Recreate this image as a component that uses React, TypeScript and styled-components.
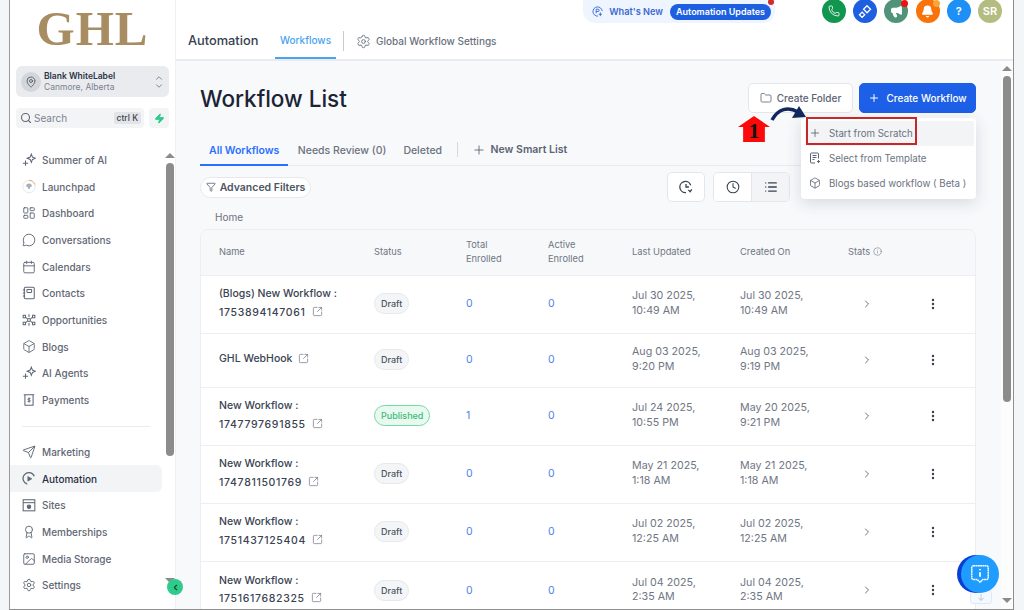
import styled, { createGlobalStyle } from "styled-components";
import {
  Bell,
  Box,
  Calendar,
  ChevronDown,
  ChevronLeft,
  ChevronRight,
  ChevronUp,
  Clock,
  EllipsisVertical,
  Folder,
  Funnel,
  Image,
  Info,
  LayoutDashboard,
  List,
  MapPin,
  Megaphone,
  MessageCircle,
  Phone,
  Plus,
  Search,
  Send,
  Settings,
  SquareArrowOutUpRight,
  Award,
  Zap,
} from "lucide-react";

const GlobalStyle = createGlobalStyle`
  html, body {
    margin: 0;
    height: 100%;
    background: #f4f5f6;
    font-family: Inter, "Liberation Sans", sans-serif;
    overflow: hidden;
  }
  * { box-sizing: border-box; }
`;

const SparkIcon = () => (
  <svg width="14" height="14" viewBox="0 0 24 24" fill="none" stroke="currentColor" strokeWidth="1.8">
    <path d="M6 13v9M1.5 17.5h9" />
    <path d="M16 2l2 5 5 2-5 2-2 5-2-5-5-2 5-2z" />
  </svg>
);

const LaunchIcon = () => (
  <svg width="15" height="15" viewBox="0 0 24 24" fill="none" strokeWidth="1.6">
    <circle cx="12" cy="12" r="10.5" stroke="#e3e5e8" />
    <path d="M12 1.5a10.5 10.5 0 0 1 10 7" stroke="#f0a55f" />
    <path d="M7 12a5 5 0 0 1 10 0l-3 1v3h-4v-3z" fill="#a9afb8" />
  </svg>
);

const ContactsIcon = () => (
  <svg width="14" height="14" viewBox="0 0 24 24" fill="none" stroke="currentColor" strokeWidth="1.8">
    <rect x="4" y="2" width="17" height="20" rx="2" />
    <rect x="8.5" y="6" width="8" height="5" rx="1" />
    <path d="M1.5 7h4M1.5 12h4M1.5 17h4" />
  </svg>
);

const OpportunitiesIcon = () => (
  <svg width="14" height="14" viewBox="0 0 24 24" fill="none" stroke="currentColor" strokeWidth="1.8">
    <circle cx="12" cy="12" r="2.5" />
    <path d="M2 4h4v4H2zM18 4h4v4h-4zM2 16h4v4H2zM18 16h4v4h-4z" />
    <path d="M12 2v5M12 17v5M7 8l2.5 2M17 8l-2.5 2M7 16l2.5-2M17 16l-2.5-2" />
  </svg>
);

const PaymentsIcon = () => (
  <svg width="14" height="14" viewBox="0 0 24 24" fill="none" stroke="currentColor" strokeWidth="1.8">
    <path d="M3 3h18M5 3v18h14V3" />
    <path d="M12 7.5v9M14.5 9.5h-3.2a1.3 1.3 0 0 0 0 2.6h1.6a1.3 1.3 0 0 1 0 2.6H9.5" strokeWidth="1.5" />
  </svg>
);

const AutomationIcon = () => (
  <svg width="15" height="15" viewBox="0 0 24 24" fill="none" stroke="currentColor" strokeWidth="2.2">
    <path d="M21 8A10 10 0 1 0 9 21.5" />
    <path d="M10 8.5l7 4-7 4z" fill="currentColor" strokeWidth="1" />
  </svg>
);

const SitesIcon = () => (
  <svg width="14" height="14" viewBox="0 0 24 24" fill="none" stroke="currentColor" strokeWidth="1.8">
    <rect x="2" y="3" width="20" height="19" />
    <path d="M2 8h20" />
    <circle cx="12" cy="15" r="3" fill="currentColor" />
  </svg>
);

const HistoryIcon = () => (
  <svg width="14" height="14" viewBox="0 0 24 24" fill="none" stroke="currentColor" strokeWidth="2.2">
    <path d="M20 9A9.5 9.5 0 1 0 12 21.5" />
    <path d="M12 7v5h5" />
    <path d="M16 17l3 3 3-4" />
  </svg>
);

const TemplateIcon = () => (
  <svg width="12" height="12" viewBox="0 0 24 24" fill="none" stroke="currentColor" strokeWidth="2">
    <path d="M12 22H5a2 2 0 0 1-2-2V4a2 2 0 0 1 2-2h12a2 2 0 0 1 2 2v9" />
    <path d="M7 7h8M7 11h8M7 15h4" />
    <path d="M19 16v6M16 19h6" />
  </svg>
);

const DiamondsIcon = () => (
  <svg width="14" height="14" viewBox="0 0 24 24" fill="none" stroke="white" strokeWidth="2.2">
    <path d="M15.5 3l6 6-6 6-6-6z" />
    <path d="M7 14l4.5 4.5L7 23l-4.5-4.5z" />
  </svg>
);

const NewsIcon = () => (
  <svg width="13" height="13" viewBox="0 0 24 24" fill="none" stroke="currentColor" strokeWidth="2">
    <path d="M13 22A10 10 0 1 1 22 11" />
    <path d="M9 16V7h4a2.5 2.5 0 0 1 0 5H9" />
    <path d="M18 14v8M14.5 18h7" />
  </svg>
);

const ChatInfoIcon = () => (
  <svg width="22" height="22" viewBox="0 0 24 24" fill="none" stroke="white" strokeWidth="1.6">
    <path d="M5 3h14a2 2 0 0 1 2 2v11a2 2 0 0 1-2 2h-4l-3 3-3-3H5a2 2 0 0 1-2-2V5a2 2 0 0 1 2-2z" strokeDasharray="2 0.4" />
    <path d="M12 10v5M12 6.5v1.5" strokeWidth="2" />
  </svg>
);

const navTop = [
  { label: "Summer of AI", icon: <SparkIcon /> },
  { label: "Launchpad", icon: <LaunchIcon /> },
  { label: "Dashboard", icon: <LayoutDashboard size={14} strokeWidth={1.6} /> },
  { label: "Conversations", icon: <MessageCircle size={14} strokeWidth={1.6} /> },
  { label: "Calendars", icon: <Calendar size={14} strokeWidth={1.6} /> },
  { label: "Contacts", icon: <ContactsIcon /> },
  { label: "Opportunities", icon: <OpportunitiesIcon /> },
  { label: "Blogs", icon: <Box size={15} strokeWidth={1.5} /> },
  { label: "AI Agents", icon: <SparkIcon /> },
  { label: "Payments", icon: <PaymentsIcon /> },
];

const navBottom = [
  { label: "Marketing", icon: <Send size={14} strokeWidth={1.6} /> },
  { label: "Automation", icon: <AutomationIcon />, active: true },
  { label: "Sites", icon: <SitesIcon /> },
  { label: "Memberships", icon: <Award size={14} strokeWidth={1.6} /> },
  { label: "Media Storage", icon: <Image size={14} strokeWidth={1.6} /> },
  { label: "Settings", icon: <Settings size={14} strokeWidth={1.6} /> },
];

const rows = [
  { name: "(Blogs) New Workflow :", id: "1753894147061", status: "Draft", total: 0, updated: ["Jul 30 2025,", "10:49 AM"], created: ["Jul 30 2025,", "10:49 AM"] },
  { name: "GHL WebHook", id: "", status: "Draft", total: 0, updated: ["Aug 03 2025,", "9:20 PM"], created: ["Aug 03 2025,", "9:19 PM"] },
  { name: "New Workflow :", id: "1747797691855", status: "Published", total: 1, updated: ["Jul 24 2025,", "10:55 PM"], created: ["May 20 2025,", "9:21 PM"] },
  { name: "New Workflow :", id: "1747811501769", status: "Draft", total: 0, updated: ["May 21 2025,", "1:18 AM"], created: ["May 21 2025,", "1:18 AM"] },
  { name: "New Workflow :", id: "1751437125404", status: "Draft", total: 0, updated: ["Jul 02 2025,", "12:25 AM"], created: ["Jul 02 2025,", "12:25 AM"] },
  { name: "New Workflow :", id: "1751617682325", status: "Draft", total: 0, updated: ["Jul 04 2025,", "2:35 AM"], created: ["Jul 04 2025,", "2:35 AM"] },
];

const App = () => {
  return (
    <Frame>
      <GlobalStyle />
      <Sidebar>
        <Logo>GHL</Logo>
        <Switcher>
          <PinAvatar>
            <MapPin size={12} strokeWidth={1.8} />
          </PinAvatar>
          <SwitcherText>
            <strong>Blank WhiteLabel</strong>
            <span>Canmore, Alberta</span>
          </SwitcherText>
          <UpDown>
            <ChevronUp size={10} />
            <ChevronDown size={10} />
          </UpDown>
        </Switcher>
        <SearchRow>
          <SearchBox>
            <Search size={12} strokeWidth={2.2} />
            <span>Search</span>
            <Kbd>ctrl K</Kbd>
          </SearchBox>
          <BoltButton>
            <Zap size={11} fill="#2ecb8a" stroke="#2ecb8a" />
          </BoltButton>
        </SearchRow>
        <NavArea>
          <NavList>
            {navTop.map((item) => (
              <NavItem key={item.label}>
                {item.icon}
                <span>{item.label}</span>
              </NavItem>
            ))}
            <NavDivider />
            {navBottom.map((item) => (
              <NavItem key={item.label} $active={item.active}>
                {item.icon}
                <span>{item.label}</span>
              </NavItem>
            ))}
          </NavList>
          <SideScroll>
            <ArrowUp />
            <SideThumb />
            <SideGap />
            <ArrowDown />
          </SideScroll>
        </NavArea>
        <CollapseButton>
          <ChevronLeft size={9} strokeWidth={3} />
        </CollapseButton>
      </Sidebar>

      <Main>
        <TopBar>
          <TopLeft>
            <TopTitle>Automation</TopTitle>
            <TopTab>Workflows</TopTab>
            <TopDivider />
            <TopLink>
              <Settings size={15} strokeWidth={1.5} />
              Global Workflow Settings
            </TopLink>
          </TopLeft>
          <TopRight>
            <NewsPill>
              <NewsIcon />
              <span>What's New</span>
              <NewsBadge>Automation Updates</NewsBadge>
            </NewsPill>
            <Circles>
              <Circle $bg="#10964f">
                <Phone size={12} strokeWidth={1.7} />
              </Circle>
              <Circle $bg="#1d5fe0">
                <DiamondsIcon />
              </Circle>
              <Circle $bg="#4f9478" $dot="#f01010">
                <Megaphone size={13} fill="white" />
              </Circle>
              <Circle $bg="#f97308" $dot="#f8a53a">
                <Bell size={13} fill="white" />
              </Circle>
              <Circle $bg="#1e90f5">?</Circle>
              <Circle $bg="#b5bc82">SR</Circle>
            </Circles>
          </TopRight>
        </TopBar>

        <Body>
          <Content>
            <TitleRow>
              <PageTitle>Workflow List</PageTitle>
              <Actions>
                <GhostButton>
                  <Folder size={12} strokeWidth={1.6} />
                  Create Folder
                </GhostButton>
                <PrimaryButton>
                  <Plus size={12} strokeWidth={2} />
                  Create Workflow
                </PrimaryButton>
                <StepBadge>1</StepBadge>
                <StepArrow width="38" height="20" viewBox="0 0 38 20">
                  <path d="M2 18C8 7 18 4 28 10" fill="none" stroke="#12275e" strokeWidth="3.5" />
                  <path d="M36 15L22 16L29 4z" fill="#12275e" />
                </StepArrow>
                <Menu>
                  <MenuItem $hover>
                    <Plus size={12} strokeWidth={1.7} />
                    Start from Scratch
                    <RedBox />
                  </MenuItem>
                  <MenuItem>
                    <TemplateIcon />
                    Select from Template
                  </MenuItem>
                  <MenuItem>
                    <Box size={12} strokeWidth={1.6} />
                    Blogs based workflow ( Beta )
                  </MenuItem>
                </Menu>
              </Actions>
            </TitleRow>

            <Tabs>
              <Tab $active>All Workflows</Tab>
              <Tab>Needs Review (0)</Tab>
              <Tab>Deleted</Tab>
              <TabDivider />
              <SmartList>
                <Plus size={14} strokeWidth={1.5} />
                New Smart List
              </SmartList>
            </Tabs>

            <FilterRow>
              <FilterPill>
                <Funnel size={10} strokeWidth={1.8} />
                Advanced Filters
              </FilterPill>
              <ViewControls>
                <IconButton>
                  <HistoryIcon />
                </IconButton>
                <Segment>
                  <SegmentItem>
                    <Clock size={14} strokeWidth={1.8} />
                  </SegmentItem>
                  <SegmentItem $selected>
                    <List size={14} strokeWidth={2.4} />
                  </SegmentItem>
                </Segment>
              </ViewControls>
            </FilterRow>

            <Crumb>Home</Crumb>

            <Table>
              <HeadRow>
                <span>Name</span>
                <span>Status</span>
                <span>
                  Total
                  <br />
                  Enrolled
                </span>
                <span>
                  Active
                  <br />
                  Enrolled
                </span>
                <span>Last Updated</span>
                <span>Created On</span>
                <StatsHead>
                  Stats
                  <Info size={9} strokeWidth={1.5} />
                </StatsHead>
                <span />
              </HeadRow>
              {rows.map((row) => (
                <Row key={row.name + row.id} $short={!row.id}>
                  <NameCell>
                    {row.id ? (
                      <>
                        <div>{row.name}</div>
                        <NameLine $digits>
                          {row.id}
                          <SquareArrowOutUpRight size={11} strokeWidth={1.5} />
                        </NameLine>
                      </>
                    ) : (
                      <NameLine>
                        {row.name}
                        <SquareArrowOutUpRight size={11} strokeWidth={1.5} />
                      </NameLine>
                    )}
                  </NameCell>
                  <ChipCell>
                    <Chip $published={row.status === "Published"}>{row.status}</Chip>
                  </ChipCell>
                  <Count>{row.total}</Count>
                  <Count>0</Count>
                  <DateCell>
                    {row.updated[0]}
                    <br />
                    {row.updated[1]}
                  </DateCell>
                  <DateCell>
                    {row.created[0]}
                    <br />
                    {row.created[1]}
                  </DateCell>
                  <StatsCell>
                    <ChevronRight size={12} strokeWidth={1.8} />
                  </StatsCell>
                  <MoreCell>
                    <EllipsisVertical size={14} strokeWidth={2.2} />
                  </MoreCell>
                </Row>
              ))}
            </Table>
          </Content>
          <PageScroll>
            <ArrowUp />
            <PageThumb />
            <SideGap />
            <ArrowDown />
          </PageScroll>
          <ScrollTop>↓</ScrollTop>
          <ChatFab>
            <ChatInfoIcon />
          </ChatFab>
        </Body>
      </Main>
    </Frame>
  );
};

const Frame = styled.div`
  position: relative;
  display: flex;
  width: 1005px;
  height: 610px;
  margin-left: 9px;
  background: white;
  border-left: 1px solid #9a9a9a;
  border-right: 1px solid #8e8e8e;
  border-bottom: 1px solid #8e8e8e;
  overflow: hidden;
`;

const Sidebar = styled.aside`
  position: relative;
  flex: 0 0 166px;
  display: flex;
  flex-direction: column;
  background: white;
  border-right: 1px solid #f0f1f3;
`;

const Logo = styled.div`
  height: 60px;
  padding-top: 1px;
  text-align: center;
  font-family: "Liberation Serif", serif;
  font-weight: 700;
  font-size: 49px;
  line-height: 56px;
  letter-spacing: 1px;
  color: #a88d63;
`;

const Switcher = styled.div`
  margin: 6px 6px 0;
  height: 31px;
  display: flex;
  align-items: center;
  padding: 0 5px;
  gap: 3px;
  background: #e9ebef;
  border-radius: 6px;
`;

const PinAvatar = styled.div`
  flex: 0 0 20px;
  height: 20px;
  border-radius: 50%;
  background: #d3d6db;
  color: #555c68;
  display: flex;
  align-items: center;
  justify-content: center;
`;

const SwitcherText = styled.div`
  flex: 1;
  display: flex;
  flex-direction: column;
  font-size: 8.5px;
  line-height: 11px;
  white-space: nowrap;
  strong {
    font-weight: 600;
    color: #2c3444;
  }
  span {
    color: #7b8290;
  }
`;

const UpDown = styled.div`
  display: flex;
  flex-direction: column;
  color: #6b7280;
  svg + svg {
    margin-top: -2px;
  }
`;

const SearchRow = styled.div`
  margin: 11px 6px 0;
  display: flex;
  gap: 5px;
  height: 20px;
`;

const SearchBox = styled.div`
  flex: 1;
  display: flex;
  align-items: center;
  gap: 2px;
  padding: 0 3px 0 4px;
  background: #f3f4f6;
  border-radius: 4px;
  color: #5f6775;
  font-size: 10px;
  span:first-of-type {
    flex: 1;
    color: #7b8290;
  }
`;

const Kbd = styled.span`
  flex: none;
  padding: 1px 3px;
  background: #e2e4e8;
  border-radius: 2px;
  color: #3c4452;
  font-size: 8.5px;
  font-weight: 500;
`;

const BoltButton = styled.div`
  flex: 0 0 20px;
  display: flex;
  align-items: center;
  justify-content: center;
  background: #f3f4f6;
  border-radius: 4px;
`;

const NavArea = styled.div`
  flex: 1;
  display: flex;
  margin-top: 18.6px;
  min-height: 0;
`;

const NavList = styled.nav`
  flex: 0 0 155px;
`;

const NavItem = styled.div<{ $active?: boolean }>`
  height: 26.7px;
  margin-right: 3px;
  padding-left: 12px;
  display: flex;
  align-items: center;
  gap: 6px;
  border-radius: 0 6px 6px 0;
  font-size: 10px;
  font-weight: 500;
  color: ${({ $active }) => ($active ? "#273043" : "#5f6774")};
  background: ${({ $active }) => ($active ? "#f3f4f6" : "transparent")};
  svg {
    flex: none;
    color: #5f6774;
    width: 14px;
  }
`;

const NavDivider = styled.div`
  height: 1px;
  margin: 13px 15px 11px 12px;
  background: #e9ebee;
`;

const SideScroll = styled.div`
  flex: 0 0 8px;
  display: flex;
  flex-direction: column;
  align-items: center;
  padding: 6px 0 26px;
`;

const ArrowUp = styled.div`
  flex: none;
  width: 0;
  height: 0;
  border-left: 5px solid transparent;
  border-right: 5px solid transparent;
  border-bottom: 5px solid #8b8b8b;
`;

const ArrowDown = styled(ArrowUp)`
  transform: rotate(180deg);
`;

const SideThumb = styled.div`
  flex: none;
  width: 8px;
  height: 293px;
  margin-top: 5px;
  border-radius: 4px;
  background: #8c8c8c;
`;

const SideGap = styled.div`
  flex: 1;
`;

const CollapseButton = styled.div`
  position: absolute;
  z-index: 3;
  left: 157px;
  bottom: 14px;
  width: 16px;
  height: 16px;
  border-radius: 50%;
  background: #2ecb8a;
  color: #17403a;
  display: flex;
  align-items: center;
  justify-content: center;
`;

const Main = styled.main`
  flex: 1;
  min-width: 0;
  display: flex;
  flex-direction: column;
`;

const TopBar = styled.header`
  flex: 0 0 61px;
  display: flex;
  justify-content: space-between;
  padding: 0 11px 0 12px;
  background: white;
  border-bottom: 2px solid #e9ebee;
`;

const TopLeft = styled.div`
  display: flex;
  align-items: center;
  align-self: flex-end;
  height: 40px;
  padding-top: 4px;
`;

const TopTitle = styled.div`
  margin-top: -2px;
  font-size: 12.8px;
  font-weight: 500;
  color: #374151;
  width: 87px;
`;

const TopTab = styled.div`
  width: 61px;
  height: 100%;
  display: flex;
  align-items: center;
  justify-content: center;
  border-bottom: 2px solid #4aa3f0;
  font-size: 10px;
  font-weight: 500;
  color: #4aa3f0;
`;

const TopDivider = styled.div`
  width: 1px;
  height: 20px;
  margin: 0 12px 0 7px;
  background: #c9cdd3;
`;

const TopLink = styled.div`
  display: flex;
  align-items: center;
  gap: 5px;
  font-size: 10px;
  font-weight: 500;
  color: #6b7280;
  white-space: nowrap;
`;

const TopRight = styled.div`
  display: flex;
  align-items: flex-start;
  gap: 47px;
`;

const NewsPill = styled.div`
  position: relative;
  width: 192px;
  height: 23px;
  display: flex;
  align-items: center;
  padding: 0 4px 0 9px;
  gap: 6px;
  background: #eef5ff;
  border-radius: 0 0 12px 12px;
  font-size: 9.2px;
  font-weight: 600;
  color: #3d68d2;
  white-space: nowrap;
  &::after {
    content: "";
    position: absolute;
    right: 1px;
    top: -1px;
    width: 6px;
    height: 6px;
    border-radius: 50%;
    background: #d02a2a;
  }
`;

const NewsBadge = styled.span`
  margin-left: 1px;
  height: 16px;
  padding: 0 6px;
  display: flex;
  align-items: center;
  border-radius: 8px;
  background: #1d5fe0;
  color: white;
  font-size: 9px;
`;

const Circles = styled.div`
  display: flex;
  gap: 7.2px;
  margin-top: -1px;
`;

const Circle = styled.div<{ $bg: string; $dot?: string }>`
  position: relative;
  width: 24px;
  height: 24px;
  border-radius: 50%;
  background: ${({ $bg }) => $bg};
  color: white;
  display: flex;
  align-items: center;
  justify-content: center;
  font-size: 11px;
  font-weight: 600;
  ${({ $dot }) =>
    $dot &&
    `&::after {
      content: "";
      position: absolute;
      right: 0;
      top: 1px;
      width: 7px;
      height: 7px;
      border-radius: 50%;
      background: ${$dot};
    }`}
`;

const Body = styled.div`
  position: relative;
  flex: 1;
  min-height: 0;
  display: flex;
  background: #f8f9fb;
`;

const Content = styled.section`
  flex: 1;
  min-width: 0;
  padding: 22px 25px 0 24px;
  overflow: hidden;
`;

const TitleRow = styled.div`
  display: flex;
  align-items: center;
  justify-content: space-between;
  height: 30px;
`;

const PageTitle = styled.h1`
  margin: 0;
  font-size: 22.5px;
  font-weight: 500;
  color: #1b2436;
`;

const Actions = styled.div`
  position: relative;
  display: flex;
  gap: 6px;
`;

const GhostButton = styled.div`
  width: 105px;
  height: 30px;
  display: flex;
  align-items: center;
  justify-content: center;
  gap: 5px;
  background: white;
  border: 1px solid #e4e6ea;
  border-radius: 5px;
  font-size: 10px;
  font-weight: 500;
  color: #5b6472;
`;

const PrimaryButton = styled(GhostButton)`
  width: 117px;
  gap: 6px;
  background: #1d5fe6;
  border-color: #1d5fe6;
  color: white;
`;

const StepBadge = styled.div`
  position: absolute;
  left: -10px;
  top: 33px;
  width: 32px;
  height: 26px;
  padding-top: 5px;
  background: #fb0a0a;
  clip-path: polygon(50% 0, 100% 42%, 84% 42%, 84% 100%, 16% 100%, 16% 42%, 0 42%);
  text-align: center;
  font-family: "Liberation Serif", serif;
  font-size: 22px;
  font-weight: 700;
  line-height: 20px;
  color: #1b1111;
`;

const StepArrow = styled.svg`
  position: absolute;
  left: 22px;
  top: 19px;
  z-index: 3;
`;

const Menu = styled.div`
  position: absolute;
  right: 0;
  top: 35px;
  z-index: 2;
  width: 175px;
  height: 81px;
  padding-top: 3px;
  background: white;
  border-radius: 4px;
  box-shadow: 0 4px 16px rgba(40, 50, 70, 0.16);
`;

const MenuItem = styled.div<{ $hover?: boolean }>`
  position: relative;
  height: 25px;
  margin: 0 2px 0 4px;
  padding: 0 0 1px 4px;
  display: flex;
  align-items: center;
  gap: 8px;
  background: ${({ $hover }) => ($hover ? "#f3f4f6" : "transparent")};
  font-size: 9.7px;
  color: #6b7280;
  white-space: nowrap;
  svg {
    flex: none;
    color: #5b6472;
  }
`;

const RedBox = styled.div`
  position: absolute;
  left: 1px;
  top: -4px;
  width: 111px;
  height: 28px;
  border: 2px solid #c62828;
`;

const Tabs = styled.div`
  margin-top: 24px;
  height: 29px;
  display: flex;
  align-items: center;
  border-bottom: 1px solid #e9ebee;
`;

const Tab = styled.div<{ $active?: boolean }>`
  height: 29px;
  padding: 0 ${({ $active }) => ($active ? "9px" : "8.5px")};
  margin-right: ${({ $active }) => ($active ? "1px" : "0")};
  display: flex;
  align-items: center;
  border-bottom: 2px solid ${({ $active }) => ($active ? "#2970ff" : "transparent")};
  font-size: 10.5px;
  font-weight: ${({ $active }) => ($active ? 600 : 500)};
  color: ${({ $active }) => ($active ? "#2970ff" : "#6b7280")};
`;

const TabDivider = styled.div`
  width: 1px;
  height: 15px;
  margin: 0 14px 3px 6px;
  background: #d5d8dd;
`;

const SmartList = styled.div`
  display: flex;
  align-items: center;
  gap: 5px;
  margin-bottom: 3px;
  font-size: 10.5px;
  font-weight: 600;
  color: #5b6472;
`;

const FilterRow = styled.div`
  margin-top: 6px;
  height: 30px;
  display: flex;
  align-items: center;
  justify-content: space-between;
`;

const FilterPill = styled.div`
  width: 111px;
  height: 21px;
  display: flex;
  align-items: center;
  justify-content: center;
  gap: 4px;
  background: white;
  border: 1px solid #e6e8eb;
  border-radius: 11px;
  font-size: 10.5px;
  font-weight: 600;
  color: #4b5563;
`;

const ViewControls = styled.div`
  display: flex;
  gap: 8px;
  margin-right: 186px;
`;

const IconButton = styled.div`
  width: 38px;
  height: 30px;
  display: flex;
  align-items: center;
  justify-content: center;
  background: white;
  border: 1px solid #e4e6ea;
  border-radius: 5px;
  color: #374151;
`;

const Segment = styled.div`
  display: flex;
  width: 77px;
  height: 30px;
  background: white;
  border: 1px solid #e4e6ea;
  border-radius: 5px;
  overflow: hidden;
`;

const SegmentItem = styled.div<{ $selected?: boolean }>`
  flex: 1;
  display: flex;
  align-items: center;
  justify-content: center;
  color: #374151;
  background: ${({ $selected }) => ($selected ? "#f3f4f6" : "white")};
  & + & {
    border-left: 1px solid #e4e6ea;
  }
`;

const Crumb = styled.div`
  margin: 8px 0 0 15px;
  height: 14px;
  font-size: 10px;
  line-height: 14px;
  color: #6b7280;
`;

const Table = styled.div`
  margin-top: 5px;
  background: white;
  border: 1px solid #eceef1;
  border-radius: 8px 8px 0 0;
  width: 776px;
`;

const HeadRow = styled.div`
  display: grid;
  grid-template-columns: 155px 92px 82px 84px 108px 108px 60px 50px;
  align-items: center;
  height: 46px;
  padding: 0 0 2px 18px;
  background: #f7f8fa;
  border-radius: 8px 8px 0 0;
  border-bottom: 1px solid #eceef1;
  font-size: 9.3px;
  line-height: 14px;
  color: #6f7683;
`;

const StatsHead = styled.span`
  display: flex;
  align-items: center;
  gap: 3px;
  white-space: nowrap;
`;

const Row = styled.div<{ $short?: boolean }>`
  display: grid;
  grid-template-columns: 155px 92px 82px 84px 108px 108px 60px 50px;
  align-items: center;
  height: ${({ $short }) => ($short ? "54px" : "58px")};
  padding: 0 0 2px 18px;
  border-bottom: 1px solid #eceef1;
  &:last-child {
    border-bottom: 0;
  }
`;

const NameCell = styled.div`
  font-size: 10.5px;
  font-weight: 500;
  line-height: 18.5px;
  color: #3a4352;
  white-space: nowrap;
`;

const NameLine = styled.div<{ $digits?: boolean }>`
  display: flex;
  align-items: center;
  gap: 6px;
  letter-spacing: ${({ $digits }) => ($digits ? "0.66px" : "0")};
  svg {
    color: #6b7280;
    margin-top: -3px;
  }
`;

const ChipCell = styled.div`
  display: flex;
`;

const Chip = styled.span<{ $published?: boolean }>`
  display: inline-flex;
  align-items: center;
  height: 21px;
  padding: 0 6px;
  border-radius: 11px;
  border: 1px solid ${({ $published }) => ($published ? "#74d9a5" : "#e6e8eb")};
  background: ${({ $published }) => ($published ? "#e8f9f0" : "#f4f5f7")};
  color: ${({ $published }) => ($published ? "#3cbb78" : "#4b5563")};
  font-size: 9px;
  font-weight: 500;
`;

const Count = styled.div`
  font-size: 10.5px;
  color: #4a84e8;
`;

const DateCell = styled.div`
  font-size: 10.7px;
  line-height: 14.5px;
  color: #6f7683;
  white-space: nowrap;
`;

const StatsCell = styled.div`
  padding-left: 13px;
  color: #5b6472;
  display: flex;
`;

const MoreCell = styled.div`
  display: flex;
  justify-content: center;
  color: #3a4352;
`;

const PageScroll = styled.div`
  flex: 0 0 12px;
  display: flex;
  flex-direction: column;
  align-items: center;
  padding: 5px 0 6px;
  background: #fcfcfc;
`;

const PageThumb = styled.div`
  flex: none;
  width: 8px;
  height: 326px;
  margin-top: 5px;
  border-radius: 4px;
  background: #8c8c8c;
`;

const ScrollTop = styled.div`
  position: absolute;
  right: 21px;
  bottom: 5px;
  width: 22px;
  height: 14px;
  border: 1px solid #dbe9fb;
  border-radius: 3px;
  background: #f5f9ff;
  text-align: center;
  font-size: 9px;
  line-height: 14px;
  color: #b6c4d6;
`;

const ChatFab = styled.div`
  position: absolute;
  right: 14px;
  bottom: 16px;
  width: 38px;
  height: 38px;
  border-radius: 50%;
  display: flex;
  align-items: center;
  justify-content: center;
  background: #1e9cff;
  box-shadow: -4px 0 0 #0a3fd6;
`;

export default App;
